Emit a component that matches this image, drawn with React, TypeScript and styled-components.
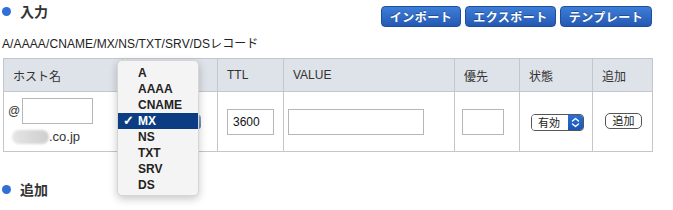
import React from "react";
import styled, { createGlobalStyle } from "styled-components";

const Global = createGlobalStyle`
  html, body { margin: 0; padding: 0; background: #fff; }
  body { font-family: "Liberation Sans", "Noto Sans CJK JP", sans-serif; color: #222; }
`;

const Page = styled.div`
  position: relative;
  width: 673px;
  height: 210px;
  overflow: hidden;
  padding: 0 21px 0 2px;
  box-sizing: border-box;
`;

const TopBar = styled.div`
  display: flex;
  justify-content: space-between;
  align-items: flex-start;
  height: 31px;
`;

const SectionTitle = styled.h2<{ $top?: number }>`
  display: flex;
  align-items: center;
  gap: 9px;
  margin: ${(p) => p.$top ?? 3}px 0 0 0;
  font-family: "Noto Sans CJK JP", sans-serif;
  font-size: 14px;
  font-weight: 700;
  color: #333;
  line-height: 16px;
  &::before {
    content: "";
    width: 9px;
    height: 9px;
    border-radius: 50%;
    background: #2f6fd6;
  }
`;

const Buttons = styled.div`
  display: flex;
  gap: 4px;
  margin-top: 6px;
`;

const BlueButton = styled.button<{ $w: number }>`
  width: ${(p) => p.$w}px;
  height: 21px;
  border: 1px solid #1d4f9e;
  border-radius: 4px;
  background: linear-gradient(#3d7ed8, #2559b3);
  color: #fff;
  font-family: "Noto Sans CJK JP", sans-serif;
  font-size: 12px;
  font-weight: 700;
  letter-spacing: 0.5px;
  padding: 0;
  line-height: 19px;
  text-shadow: 0 -1px 0 rgba(0, 0, 0, 0.3);
`;

const Subtitle = styled.div`
  font-size: 12px;
  line-height: 14px;
  margin: 6px 0 0 0;
  color: #222;
  letter-spacing: 0.1px;
`;

const Table = styled.table`
  border-collapse: collapse;
  margin: 7px 0 0 1px;
  width: 649px;
  table-layout: fixed;
`;

const Th = styled.th<{ $w: number }>`
  width: ${(p) => p.$w}px;
  height: 33px;
  box-sizing: border-box;
  background: #dee2e9;
  border: 1px solid #c3c6cc;
  text-align: left;
  padding: 0 0 0 9px;
  font-family: "Liberation Sans", "Noto Sans CJK JP", sans-serif;
  font-size: 12px;
  font-weight: 400;
  color: #333;
`;

const Td = styled.td<{ $top?: boolean; $pl?: number }>`
  height: 60px;
  box-sizing: border-box;
  border: 1px solid #c3c6cc;
  padding: ${(p) => (p.$top ? "6px 0 0 4px" : `0 0 0 ${p.$pl ?? 9}px`)};
  vertical-align: ${(p) => (p.$top ? "top" : "middle")};
  font-size: 12px;
`;

const HostLine = styled.div`
  display: flex;
  align-items: center;
  gap: 2px;
  font-size: 12px;
  color: #333;
`;

const TextInput = styled.input<{ $w: number; $h?: number }>`
  width: ${(p) => p.$w}px;
  height: ${(p) => p.$h ?? 26}px;
  box-sizing: border-box;
  border: 1px solid #b7b7b7;
  padding: 0 0 0 5px;
  font-family: "Liberation Sans", sans-serif;
  font-size: 12px;
  color: #111;
  margin: 0;
  display: block;
  outline: none;
`;

const Domain = styled.div`
  display: flex;
  align-items: center;
  margin-top: 5px;
  margin-left: 4px;
  font-size: 13px;
  color: #333;
  line-height: 16px;
`;

const Blur = styled.span`
  display: inline-block;
  width: 37px;
  height: 14px;
  border-radius: 7px;
  background: linear-gradient(90deg, #e6e6e6 0%, #d9d9d9 50%, #cfcfcf 100%);
  filter: blur(1px);
`;

const TypeSelect = styled.div`
  width: 68px;
  height: 14px;
  margin-left: 0;
  border-radius: 3px;
  background: linear-gradient(#8aa6c8, #6684ad);
`;

const StatusSelect = styled.div`
  display: flex;
  width: 53px;
  height: 17px;
  box-sizing: border-box;
  border: 1px solid #555;
  border-radius: 4px;
  overflow: hidden;
  margin-top: 1px;
`;

const StatusLabel = styled.span`
  flex: 1;
  font-family: "Noto Sans CJK JP", sans-serif;
  font-size: 11px;
  line-height: 15px;
  padding-left: 6px;
  color: #222;
  background: #fff;
`;

const StatusArrow = styled.span`
  width: 15px;
  display: flex;
  align-items: center;
  justify-content: center;
  background: linear-gradient(#2a6fd8, #1b55b5);
`;

const SmallButton = styled.button`
  width: 37px;
  height: 16px;
  box-sizing: border-box;
  border: 1px solid #555;
  border-radius: 5px;
  background: #fff;
  font-family: "Noto Sans CJK JP", sans-serif;
  font-size: 11px;
  line-height: 13px;
  padding: 0;
  color: #222;
  margin-top: -2px;
  display: block;
`;

const Menu = styled.ul`
  position: absolute;
  left: 117px;
  top: 60px;
  width: 82px;
  height: 136px;
  box-sizing: border-box;
  margin: 0;
  padding: 4px 0 0 0;
  list-style: none;
  background: #f4f4f4;
  border-radius: 5px;
  border: 1px solid #d6d6d6;
  box-shadow: 0 3px 9px rgba(0, 0, 0, 0.22);
`;

const MenuItem = styled.li<{ $active?: boolean }>`
  position: relative;
  height: 16px;
  line-height: 16px;
  padding-left: 20px;
  font-family: "Liberation Sans", sans-serif;
  font-size: 12px;
  font-weight: 700;
  color: ${(p) => (p.$active ? "#fff" : "#222")};
  background: ${(p) => (p.$active ? "#0c3d83" : "transparent")};
`;

const Check = styled.span`
  position: absolute;
  left: 5px;
  top: 0;
  font-size: 13px;
`;

const Chevron = () => (
  <svg width="9" height="11" viewBox="0 0 9 11">
    <path d="M1.5 4 L4.5 1.5 L7.5 4 M1.5 7 L4.5 9.5 L7.5 7" stroke="#fff" strokeWidth="1.4" fill="none" strokeLinecap="round" strokeLinejoin="round" />
  </svg>
);

const types = ["A", "AAAA", "CNAME", "MX", "NS", "TXT", "SRV", "DS"];

export default function App() {
  return (
    <Page>
      <Global />
      <TopBar>
        <SectionTitle>入力</SectionTitle>
        <Buttons>
          <BlueButton $w={80}>インポート</BlueButton>
          <BlueButton $w={91}>エクスポート</BlueButton>
          <BlueButton $w={92}>テンプレート</BlueButton>
        </Buttons>
      </TopBar>
      <Subtitle>A/AAAA/CNAME/MX/NS/TXT/SRV/DSレコード</Subtitle>
      <Table>
        <thead>
          <tr>
            <Th $w={119}>ホスト名</Th>
            <Th $w={95}></Th>
            <Th $w={66}>TTL</Th>
            <Th $w={171}>VALUE</Th>
            <Th $w={65}>優先</Th>
            <Th $w={73}>状態</Th>
            <Th $w={60}>追加</Th>
          </tr>
        </thead>
        <tbody>
          <tr>
            <Td $top>
              <HostLine>
                @ <TextInput $w={71} />
              </HostLine>
              <Domain>
                <Blur />
                .co.jp
              </Domain>
            </Td>
            <Td $pl={10}>
              <TypeSelect />
            </Td>
            <Td $pl={9}>
              <TextInput $w={47} defaultValue="3600" />
            </Td>
            <Td $pl={4}>
              <TextInput $w={136} />
            </Td>
            <Td $pl={7}>
              <TextInput $w={42} />
            </Td>
            <Td $pl={11}>
              <StatusSelect>
                <StatusLabel>有効</StatusLabel>
                <StatusArrow>
                  <Chevron />
                </StatusArrow>
              </StatusSelect>
            </Td>
            <Td $pl={12}>
              <SmallButton>追加</SmallButton>
            </Td>
          </tr>
        </tbody>
      </Table>
      <SectionTitle $top={29}>追加</SectionTitle>
      <Menu>
        {types.map((t) => (
          <MenuItem key={t} $active={t === "MX"}>
            {t === "MX" && <Check>✓</Check>}
            {t}
          </MenuItem>
        ))}
      </Menu>
    </Page>
  );
}
